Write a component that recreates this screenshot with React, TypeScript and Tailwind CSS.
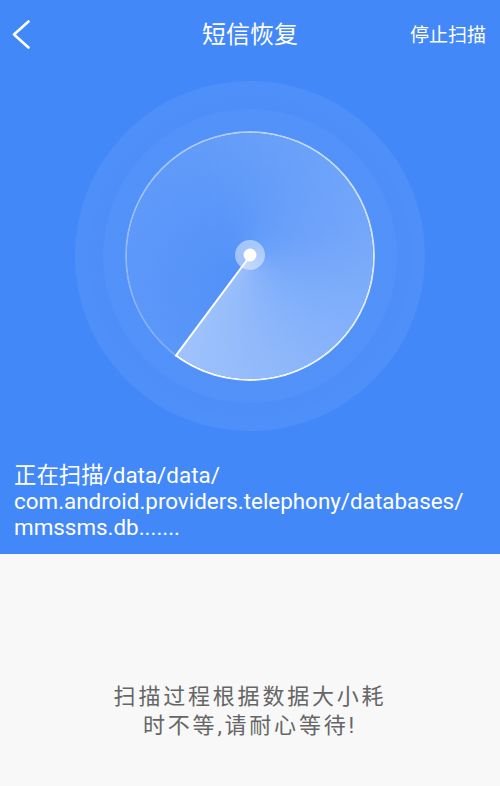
const BackIcon = () => (
  <svg width="22" height="30" viewBox="0 0 22 30" fill="none">
    <polyline points="17.5,1.5 3,14.5 17.5,27.5" stroke="white" strokeWidth="2.6" strokeLinecap="round" strokeLinejoin="round" />
  </svg>
);

const Radar = () => (
  <div className="relative mx-auto mt-[11px] size-[350px]">
    <div className="absolute inset-0 rounded-full bg-[radial-gradient(circle,rgba(255,255,255,0.05)_60%,rgba(255,255,255,0.075)_84%,rgba(255,255,255,0.05)_100%)]" />
    <div className="absolute inset-[28px] rounded-full bg-[radial-gradient(circle,rgba(255,255,255,0.03)_75%,rgba(255,255,255,0.07)_100%)]" />
    <div className="absolute inset-[50px] rounded-full bg-[radial-gradient(circle,rgba(255,255,255,0)_20%,rgba(255,255,255,0.08)_100%)]" />
    <div className="absolute inset-[50px] rounded-full bg-[conic-gradient(from_216.7deg,rgba(255,255,255,0)_0%,rgba(255,255,255,0.04)_30%,rgba(255,255,255,0.15)_60%,rgba(255,255,255,0.42)_100%)]" />
    <div className="absolute inset-[50px] rounded-full bg-[conic-gradient(from_216.7deg,rgba(255,255,255,0.2)_0%,rgba(255,255,255,0.55)_45%,rgba(255,255,255,0.95)_100%)] [mask:radial-gradient(circle,transparent_122.8px,black_123.3px,black_125px,transparent_125.5px)]" />
    <svg className="absolute inset-0" width="350" height="350" viewBox="0 0 350 350">
      <line x1="175" y1="175" x2="100.3" y2="275.3" stroke="white" strokeWidth="2" />
      <circle cx="175" cy="174" r="15" fill="white" fillOpacity="0.45" />
      <circle cx="175" cy="174" r="6.5" fill="white" />
    </svg>
  </div>
);

export default function App() {
  return (
    <div className="flex h-[786px] w-[500px] flex-col bg-[#f8f8f8] font-['Roboto','Noto_Sans_CJK_SC',sans-serif]">
      <div className="h-[554px] bg-[#4388f9] text-white">
        <div className="grid h-[70px] grid-cols-[1fr_auto_1fr] items-center px-[11px]">
          <div className="flex">
            <BackIcon />
          </div>
          <span className="text-[24px] leading-none">短信恢复</span>
          <span className="mt-[1px] justify-self-end pr-[3px] text-[19px] leading-none">停止扫描</span>
        </div>
        <Radar />
        <div className="mt-[31px] px-[14px] text-[22.4px] leading-[26px]">
          正在扫描/data/data/
          <br />
          com.android.providers.telephony/databases/
          <br />
          mmssms.db.......
        </div>
      </div>
      <div className="flex flex-1 flex-col items-center pt-[128px] text-center text-[22px] leading-[29px] tracking-[2.8px] text-[#666666]">
        <span>扫描过程根据数据大小耗</span>
        <span>时不等,请耐心等待!</span>
      </div>
    </div>
  );
}
